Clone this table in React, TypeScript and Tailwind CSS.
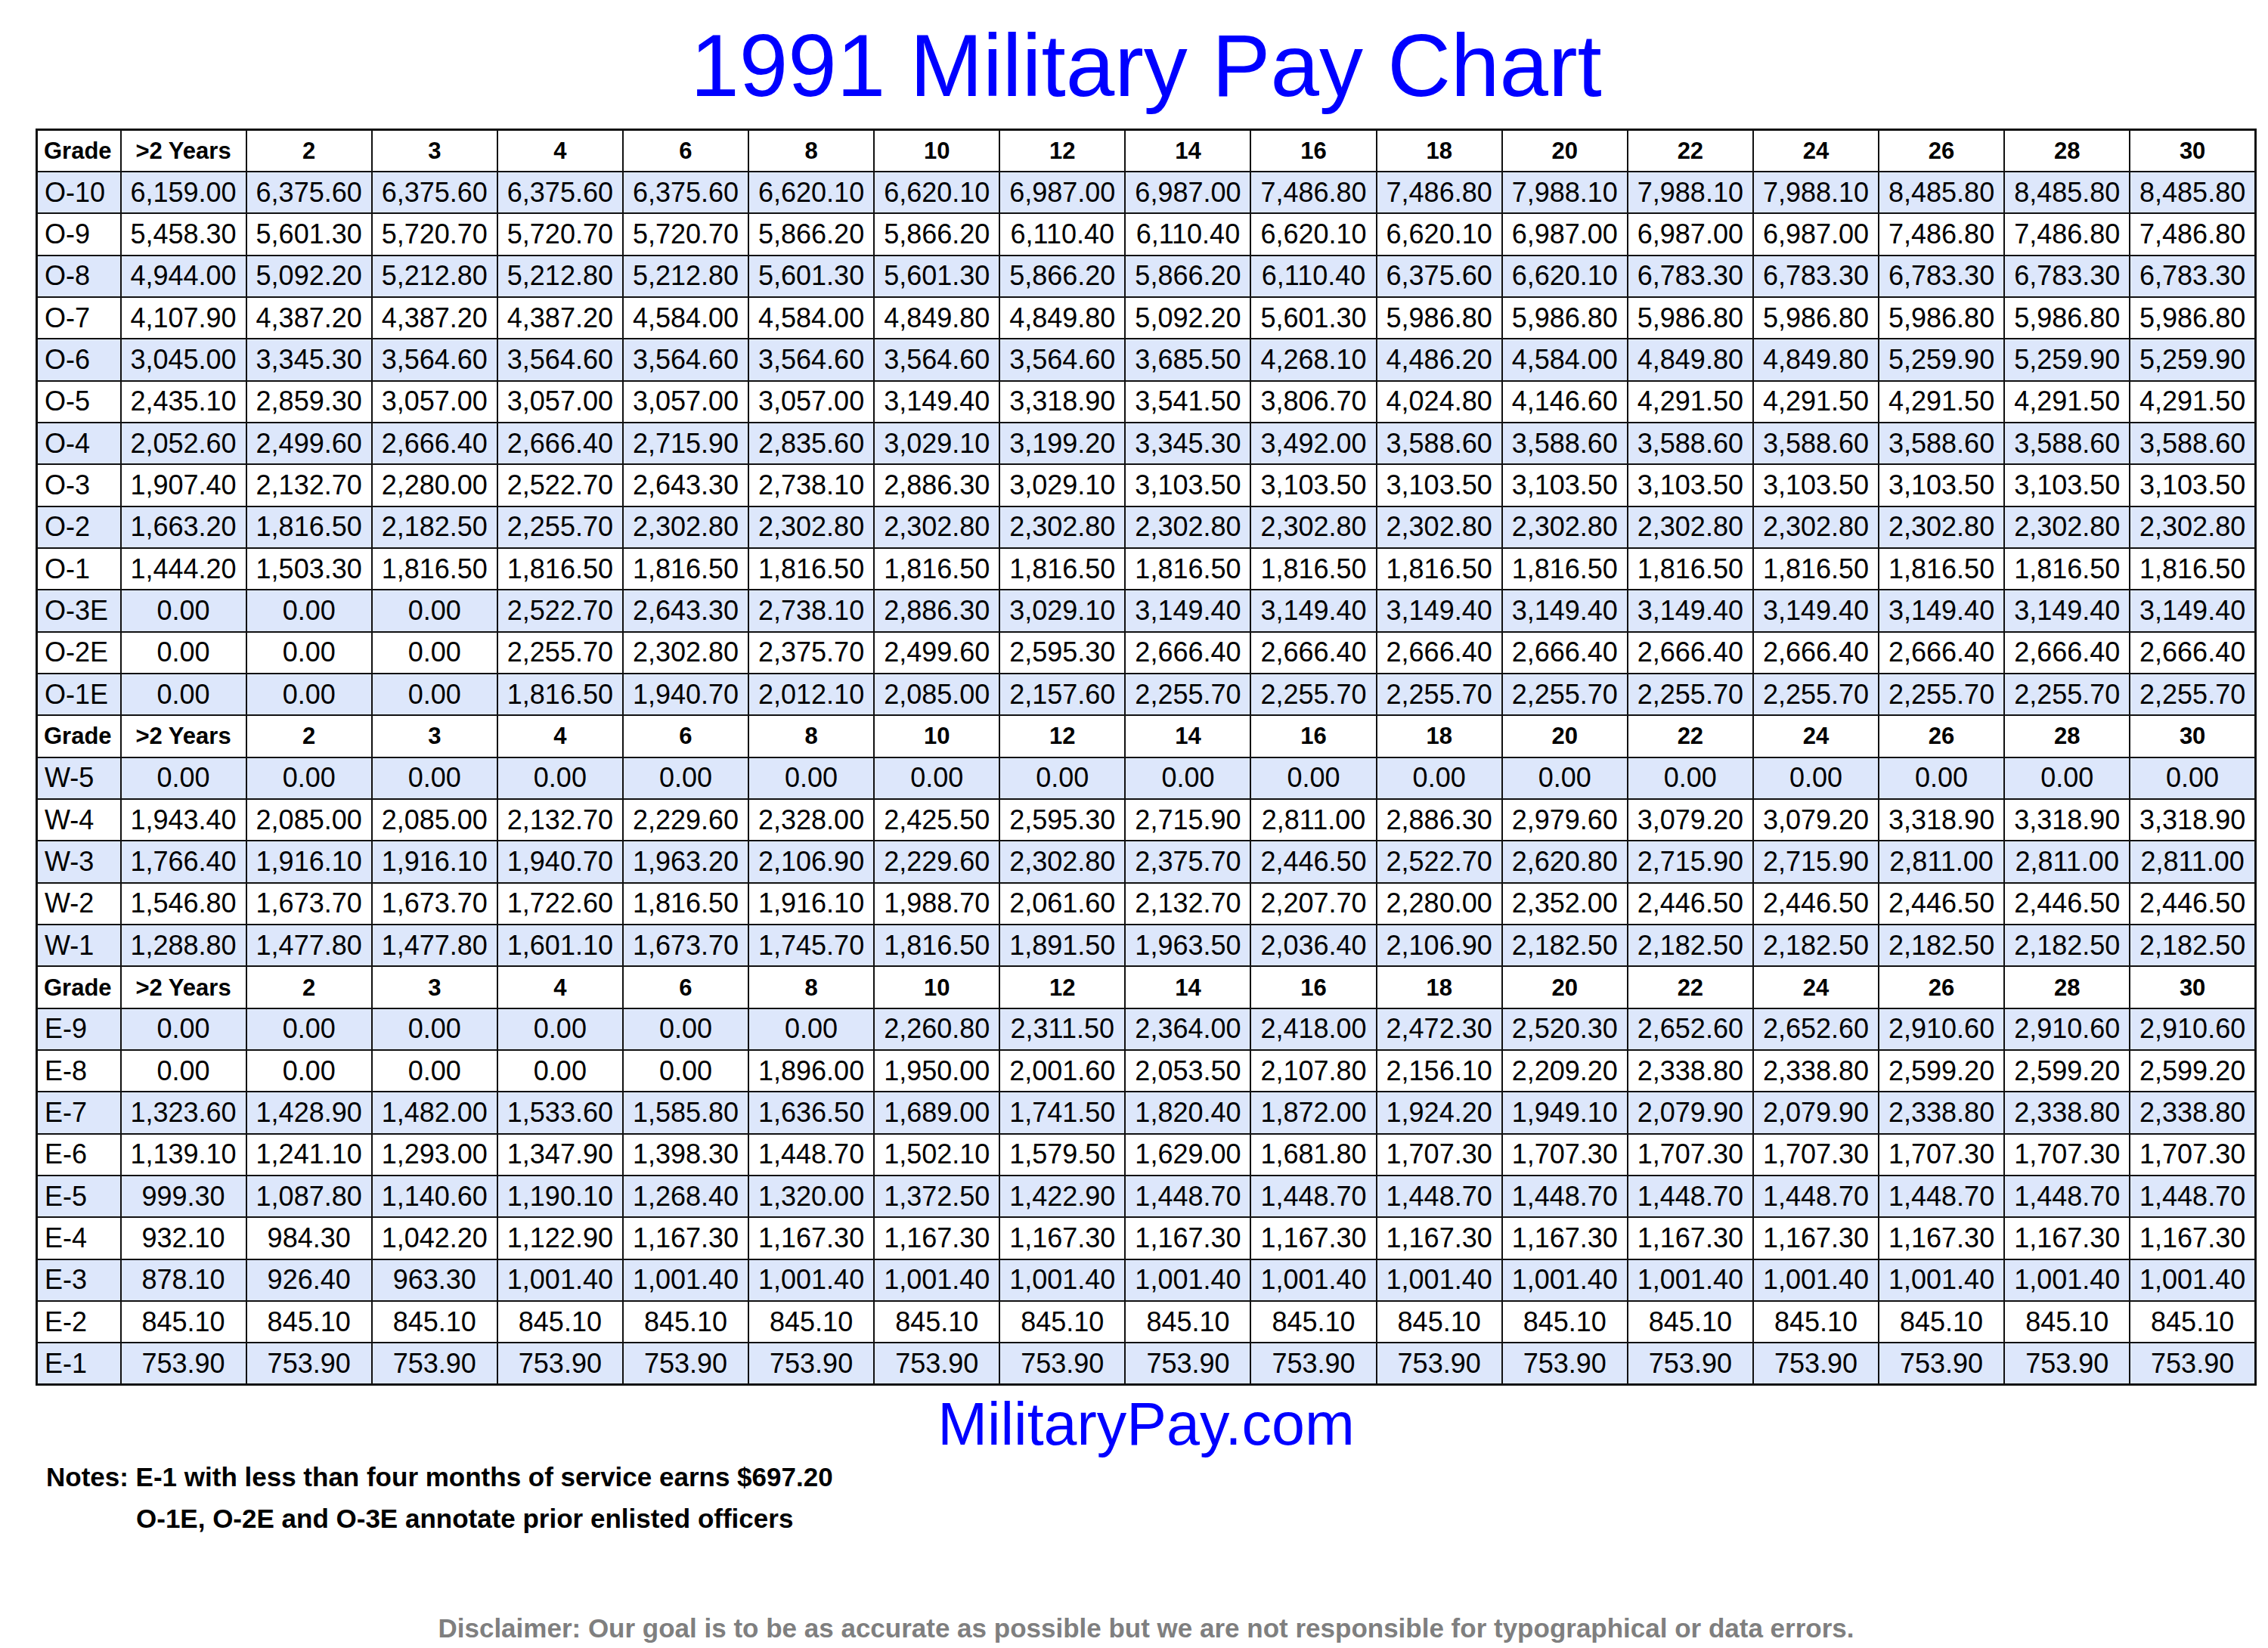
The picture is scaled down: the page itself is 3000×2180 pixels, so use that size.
import type { FC } from 'react';

const years = ['>2 Years', '2', '3', '4', '6', '8', '10', '12', '14', '16', '18', '20', '22', '24', '26', '28', '30'];

const rep = (v: string, n: number) => Array<string>(n).fill(v);

type Row = [string, string[]];

const officers: Row[] = [
  ['O-10', ['6,159.00', '6,375.60', '6,375.60', '6,375.60', '6,375.60', '6,620.10', '6,620.10', '6,987.00', '6,987.00', '7,486.80', '7,486.80', '7,988.10', '7,988.10', '7,988.10', '8,485.80', '8,485.80', '8,485.80']],
  ['O-9', ['5,458.30', '5,601.30', '5,720.70', '5,720.70', '5,720.70', '5,866.20', '5,866.20', '6,110.40', '6,110.40', '6,620.10', '6,620.10', '6,987.00', '6,987.00', '6,987.00', '7,486.80', '7,486.80', '7,486.80']],
  ['O-8', ['4,944.00', '5,092.20', '5,212.80', '5,212.80', '5,212.80', '5,601.30', '5,601.30', '5,866.20', '5,866.20', '6,110.40', '6,375.60', '6,620.10', '6,783.30', '6,783.30', '6,783.30', '6,783.30', '6,783.30']],
  ['O-7', ['4,107.90', '4,387.20', '4,387.20', '4,387.20', '4,584.00', '4,584.00', '4,849.80', '4,849.80', '5,092.20', '5,601.30', ...rep('5,986.80', 7)]],
  ['O-6', ['3,045.00', '3,345.30', ...rep('3,564.60', 6), '3,685.50', '4,268.10', '4,486.20', '4,584.00', '4,849.80', '4,849.80', ...rep('5,259.90', 3)]],
  ['O-5', ['2,435.10', '2,859.30', ...rep('3,057.00', 4), '3,149.40', '3,318.90', '3,541.50', '3,806.70', '4,024.80', '4,146.60', ...rep('4,291.50', 5)]],
  ['O-4', ['2,052.60', '2,499.60', '2,666.40', '2,666.40', '2,715.90', '2,835.60', '3,029.10', '3,199.20', '3,345.30', '3,492.00', ...rep('3,588.60', 7)]],
  ['O-3', ['1,907.40', '2,132.70', '2,280.00', '2,522.70', '2,643.30', '2,738.10', '2,886.30', '3,029.10', ...rep('3,103.50', 9)]],
  ['O-2', ['1,663.20', '1,816.50', '2,182.50', '2,255.70', ...rep('2,302.80', 13)]],
  ['O-1', ['1,444.20', '1,503.30', ...rep('1,816.50', 15)]],
  ['O-3E', [...rep('0.00', 3), '2,522.70', '2,643.30', '2,738.10', '2,886.30', '3,029.10', ...rep('3,149.40', 9)]],
  ['O-2E', [...rep('0.00', 3), '2,255.70', '2,302.80', '2,375.70', '2,499.60', '2,595.30', ...rep('2,666.40', 9)]],
  ['O-1E', [...rep('0.00', 3), '1,816.50', '1,940.70', '2,012.10', '2,085.00', '2,157.60', ...rep('2,255.70', 9)]],
];

const warrants: Row[] = [
  ['W-5', rep('0.00', 17)],
  ['W-4', ['1,943.40', '2,085.00', '2,085.00', '2,132.70', '2,229.60', '2,328.00', '2,425.50', '2,595.30', '2,715.90', '2,811.00', '2,886.30', '2,979.60', '3,079.20', '3,079.20', ...rep('3,318.90', 3)]],
  ['W-3', ['1,766.40', '1,916.10', '1,916.10', '1,940.70', '1,963.20', '2,106.90', '2,229.60', '2,302.80', '2,375.70', '2,446.50', '2,522.70', '2,620.80', '2,715.90', '2,715.90', ...rep('2,811.00', 3)]],
  ['W-2', ['1,546.80', '1,673.70', '1,673.70', '1,722.60', '1,816.50', '1,916.10', '1,988.70', '2,061.60', '2,132.70', '2,207.70', '2,280.00', '2,352.00', ...rep('2,446.50', 5)]],
  ['W-1', ['1,288.80', '1,477.80', '1,477.80', '1,601.10', '1,673.70', '1,745.70', '1,816.50', '1,891.50', '1,963.50', '2,036.40', '2,106.90', ...rep('2,182.50', 6)]],
];

const enlisted: Row[] = [
  ['E-9', [...rep('0.00', 6), '2,260.80', '2,311.50', '2,364.00', '2,418.00', '2,472.30', '2,520.30', '2,652.60', '2,652.60', ...rep('2,910.60', 3)]],
  ['E-8', [...rep('0.00', 5), '1,896.00', '1,950.00', '2,001.60', '2,053.50', '2,107.80', '2,156.10', '2,209.20', '2,338.80', '2,338.80', ...rep('2,599.20', 3)]],
  ['E-7', ['1,323.60', '1,428.90', '1,482.00', '1,533.60', '1,585.80', '1,636.50', '1,689.00', '1,741.50', '1,820.40', '1,872.00', '1,924.20', '1,949.10', '2,079.90', '2,079.90', ...rep('2,338.80', 3)]],
  ['E-6', ['1,139.10', '1,241.10', '1,293.00', '1,347.90', '1,398.30', '1,448.70', '1,502.10', '1,579.50', '1,629.00', '1,681.80', ...rep('1,707.30', 7)]],
  ['E-5', ['999.30', '1,087.80', '1,140.60', '1,190.10', '1,268.40', '1,320.00', '1,372.50', '1,422.90', ...rep('1,448.70', 9)]],
  ['E-4', ['932.10', '984.30', '1,042.20', '1,122.90', ...rep('1,167.30', 13)]],
  ['E-3', ['878.10', '926.40', '963.30', ...rep('1,001.40', 14)]],
  ['E-2', rep('845.10', 17)],
  ['E-1', rep('753.90', 17)],
];

const HeaderRow: FC = () => (
  <tr className="h-[55.35px] bg-white text-[31px] font-bold">
    <td className="border-2 border-[#111] pl-[8px] text-left">Grade</td>
    {years.map((y) => (
      <td key={y} className="border-2 border-[#111] text-center">
        {y}
      </td>
    ))}
  </tr>
);

const Section: FC<{ rows: Row[] }> = ({ rows }) => (
  <>
    <HeaderRow />
    {rows.map(([grade, pay], i) => (
      <tr key={grade} className={`h-[55.35px] text-[36px] ${i % 2 === 0 ? 'bg-[#dde7fb]' : 'bg-white'}`}>
        <td className="border-2 border-[#111] pl-[9px] text-left">{grade}</td>
        {pay.map((v, j) => (
          <td key={j} className="border-2 border-[#111] text-center">
            {v}
          </td>
        ))}
      </tr>
    ))}
  </>
);

export default function App() {
  return (
    <div className="min-h-[2180px] w-[3000px] bg-white font-['Liberation_Sans',Arial,sans-serif] text-black">
      <div className="w-[2985px] pl-[47px]">
        <h1 className="pt-[29px] text-center text-[116px] leading-[116px] text-[#0000ff]">1991 Military Pay Chart</h1>

        <table className="mt-[25px] w-[2938px] table-fixed border-collapse border-[3px] border-[#111] leading-none">
          <colgroup>
            <col className="w-[111px]" />
            {years.map((y) => (
              <col key={y} />
            ))}
          </colgroup>
          <tbody>
            <Section rows={officers} />
            <Section rows={warrants} />
            <Section rows={enlisted} />
          </tbody>
        </table>

        <p className="mt-[11px] text-center text-[79px] leading-[79px] text-[#0000ff]">MilitaryPay.com</p>

        <div className="mt-[3px] pl-[14px] text-[35px] font-bold leading-[55px]">
          <p>Notes: E-1 with less than four months of service earns $697.20</p>
          <p className="pl-[119px]">O-1E, O-2E and O-3E annotate prior enlisted officers</p>
        </div>

        <p className="mt-[90px] text-center text-[35px] font-bold leading-[55px] text-[#7f7f7f]">
          Disclaimer: Our goal is to be as accurate as possible but we are not responsible for typographical or data errors.
        </p>
      </div>
    </div>
  );
}
